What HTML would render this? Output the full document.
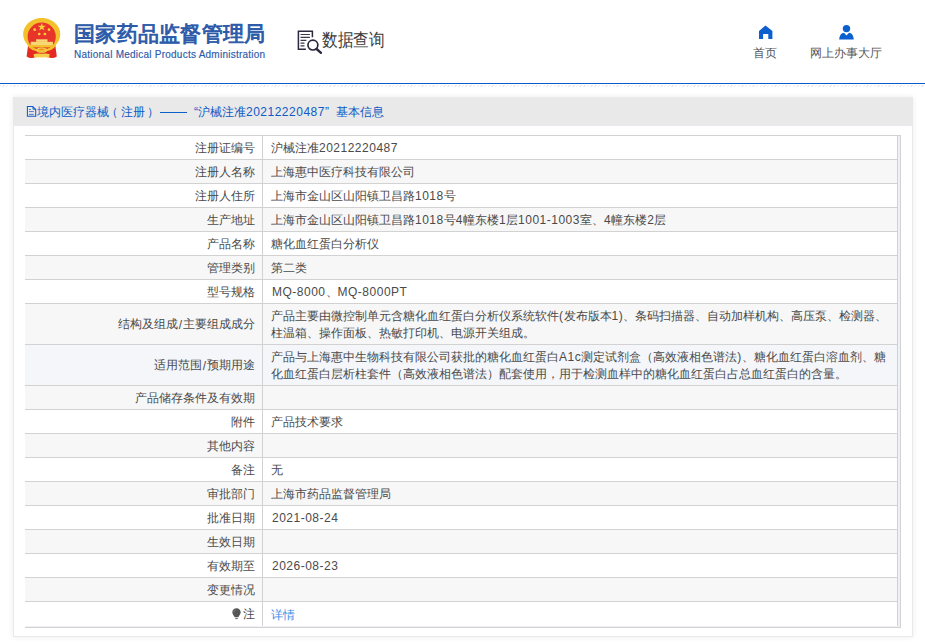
<!DOCTYPE html>
<html><head><meta charset="utf-8">
<style>
*{margin:0;padding:0;box-sizing:border-box}
html,body{width:925px;height:643px;overflow:hidden;background:#fff}
body{font-family:"Liberation Sans",sans-serif;font-size:12px;color:#4a4a4a;position:relative}
.abs{position:absolute;white-space:nowrap}
#emblem{left:23px;top:18px;width:38px;height:41px}
#title{left:74px;top:21px;font-size:21px;font-weight:400;color:#2c5aa8;line-height:26px;letter-spacing:.3px;-webkit-text-stroke:.9px #2c5aa8}
#sub{left:74px;top:49px;font-size:10px;color:#2c5aa8;-webkit-text-stroke:.15px #2c5aa8;line-height:12px;letter-spacing:.24px}
#qicon{left:297px;top:30px;width:25px;height:24px}
#qtext{left:322px;top:29px;font-size:18px;color:#3a3a3a;line-height:22px;transform:scaleX(.87);transform-origin:0 0}
.nt{top:46px;font-size:12px;line-height:14px;color:#555}
#bline{left:0;top:83px;width:925px;height:1px;background:#0a5cc8}
#hatch{left:0;top:85px;width:925px;height:2px;background:repeating-linear-gradient(135deg,#e8e8e8 0 1px,#fff 1px 2.6px)}
#panel{left:13px;top:97px;width:900px;height:540px;background:#fff;border:1px solid #eaeaea;box-shadow:0 0 6px rgba(0,0,0,.08)}
#phead{left:13px;top:97px;width:900px;height:29px;background:#e9e9e9;border-bottom:1px solid #e7eaf2}
.ph{top:104px;color:#0f5ac6;line-height:16px}
#tb{left:25px;top:135px;width:876px;height:493px;border-top:1px solid #d2d2d2;border-right:1px solid #d2d2d2;border-bottom:1px solid #d2d2d2;background:#eef1f8}
.r{position:relative;height:24px;border-bottom:1px solid #d2d2d2;width:873px;background:#fff;display:flex}
.r.g{background:#f7f7f7}
.r.h{background:#f4f6fa}
.r.m{height:41px}
.r.l{height:24px;border-bottom:none}
.k{padding-top:1px;width:238px;border-right:1px solid #d2d2d2;text-align:right;padding-right:7px;display:flex;align-items:center;justify-content:flex-end;white-space:nowrap}
.v{padding-top:1px;flex:1;padding-left:8px;border-right:1px solid #d2d2d2;display:flex;align-items:center;white-space:nowrap;line-height:17px}
.d{letter-spacing:.5px}
p{white-space:nowrap}
a{color:#3a8ee6;text-decoration:none;position:relative;top:1px}
</style></head><body>
<svg id="emblem" class="abs" viewBox="0 0 38 41">
  <path d="M5 28 L3.6 38.5 Q7 41 11 39.6 L18.7 38 L26.4 39.6 Q30.4 41 33.8 38.5 L32.4 28Z" fill="#e42a22"/>
  <ellipse cx="18.7" cy="16.3" rx="18.6" ry="16.4" fill="#f3c12c"/>
  <circle cx="18.7" cy="18.6" r="14.1" fill="#e8352a"/>
  <path d="M4.6 24 Q6 30.5 18.7 31.6 Q31.4 30.5 32.8 24 L32.8 27.5 Q30 33.4 18.7 34 Q7.4 33.4 4.6 27.5Z" fill="#f3c12c"/>
  <rect x="13.1" y="21.3" width="11.4" height="2.6" fill="#f8d874"/>
  <rect x="7.7" y="23.8" width="22.2" height="3.3" fill="#f8d874"/>
  <rect x="6.2" y="27" width="25" height="2.4" fill="#f3c12c"/>
  <polygon points="18.8,4.9 19.8,7.7 22.9,7.7 20.4,9.6 21.3,12.5 18.8,10.7 16.3,12.5 17.2,9.6 14.7,7.7 17.8,7.7" fill="#f7cf3c"/>
  <circle cx="11.7" cy="11.7" r="1.35" fill="#f7cf3c"/><circle cx="16.2" cy="16" r="1.35" fill="#f7cf3c"/>
  <circle cx="21.9" cy="16" r="1.35" fill="#f7cf3c"/><circle cx="26" cy="11.7" r="1.35" fill="#f7cf3c"/>
  <ellipse cx="18.7" cy="32.2" rx="4.6" ry="2" fill="none" stroke="#f5d04a" stroke-width="1.3"/>
  <path d="M10.5 36.3 Q14 34.8 18.7 35.8 Q23.2 34.8 26.8 36.3 L25.8 39.8 Q22 38.6 18.7 39.6 Q15 38.6 11.5 39.8Z" fill="#f5d04a"/>
</svg>
<div id="title" class="abs">国家药品监督管理局</div>
<div id="sub" class="abs">National Medical Products Administration</div>
<svg id="qicon" class="abs" viewBox="0 0 25 24">
  <path d="M8.9 19.2 H1.4 V1.3 H15.4 V7.2" fill="none" stroke="#2a2a3c" stroke-width="1.5"/>
  <path d="M3.5 4.5H12.9M3.5 7.4H12.9M3.5 10.4H9.4M3.5 13.1H7.5M3.5 15.9H7.5" stroke="#3a3a4a" stroke-width="1.1"/>
  <circle cx="15.9" cy="15.05" r="4.95" fill="none" stroke="#2a2a3c" stroke-width="1.7"/>
  <path d="M19.6 19 L24 22.8" stroke="#2a2a3c" stroke-width="2.4" stroke-linecap="round"/>
</svg>
<div id="qtext" class="abs">数据查询</div>
<svg class="abs" style="left:759px;top:25px" width="14" height="14" viewBox="0 0 14 14"><path d="M6.5 0.5 L13.4 6 V14 H9.3 V9.1 H4.1 V14 H0 V6Z" fill="#0b5fcf"/></svg>
<div class="abs nt" style="left:753px">首页</div>
<svg class="abs" style="left:839px;top:24px" width="15" height="16" viewBox="0 0 15 16"><circle cx="7.5" cy="4.6" r="3.7" fill="#0b5fcf"/><path d="M0.2 15.6 C0.5 11 2.5 9 5 8.7 L7.5 11.5 L10 8.7 C12.5 9 14.5 11 14.8 15.6Z" fill="#0b5fcf"/></svg>
<div class="abs nt" style="left:810px">网上办事大厅</div>
<div id="bline" class="abs"></div>
<div id="hatch" class="abs"></div>
<div id="panel" class="abs"></div>
<div id="phead" class="abs"></div>
<svg class="abs" style="left:26px;top:105px" width="11" height="12" viewBox="0 0 11 12"><path d="M1.4 1.5H6.8L9.7 4.4V11.2H1.4Z" fill="none" stroke="#0f5ac6" stroke-width="1.05"/><path d="M7 2V4.2H9.3" fill="none" stroke="#0f5ac6" stroke-width="1"/><path d="M3 4.5H4.9M3 6.6H7.8M3 9.4H7.8" stroke="#3a6ad0" stroke-width=".9"/></svg>
<div class="abs ph" style="left:37px">境内医疗器械</div>
<div class="abs ph" style="left:106px">（</div>
<div class="abs ph" style="left:121px">注册</div>
<div class="abs ph" style="left:147px">）</div>
<div class="abs" style="left:160px;top:112px;width:27px;height:1px;background:#0b5fc8"></div>
<div class="abs ph" style="left:194px">“</div>
<div class="abs ph" style="left:198px">沪械注准<span class="d">20212220487</span></div>
<div class="abs ph" style="left:325px">”</div>
<div class="abs ph" style="left:336px">基本信息</div>
<div id="tb" class="abs">
 <div class="r"><div class="k">注册证编号</div><div class="v"><p>沪械注准<span class="d">20212220487</span></p></div></div>
 <div class="r g"><div class="k">注册人名称</div><div class="v"><p>上海惠中医疗科技有限公司</p></div></div>
 <div class="r"><div class="k">注册人住所</div><div class="v"><p>上海市金山区山阳镇卫昌路<span class="d">1018</span>号</p></div></div>
 <div class="r g"><div class="k">生产地址</div><div class="v"><p>上海市金山区山阳镇卫昌路<span class="d">1018</span>号<span class="d">4</span>幢东楼<span class="d">1</span>层<span class="d">1001-1003</span>室、<span class="d">4</span>幢东楼<span class="d">2</span>层</p></div></div>
 <div class="r"><div class="k">产品名称</div><div class="v"><p>糖化血红蛋白分析仪</p></div></div>
 <div class="r g"><div class="k">管理类别</div><div class="v"><p>第二类</p></div></div>
 <div class="r"><div class="k">型号规格</div><div class="v"><p style="margin-left:1px"><span class="d">MQ-8000</span>、<span class="d">MQ-8000PT</span></p></div></div>
 <div class="r g m"><div class="k">结构及组成<span style="margin:0 1px">/</span>主要组成成分</div><div class="v"><p>产品主要由微控制单元含糖化血红蛋白分析仪系统软件<span class="d">(</span>发布版本<span class="d">1)</span>、条码扫描器、自动加样机构、高压泵、检测器、<br>柱温箱、操作面板、热敏打印机、电源开关组成。</p></div></div>
 <div class="r h m"><div class="k">适用范围<span style="margin:0 1px">/</span>预期用途</div><div class="v"><p>产品与上海惠中生物科技有限公司获批的糖化血红蛋白<span class="d">A1c</span>测定试剂盒（高效液相色谱法<span class="d">)</span>、糖化血红蛋白溶血剂、糖<br>化血红蛋白层析柱套件（高效液相色谱法）配套使用，用于检测血样中的糖化血红蛋白占总血红蛋白的含量。</p></div></div>
 <div class="r g"><div class="k">产品储存条件及有效期</div><div class="v"><p></p></div></div>
 <div class="r"><div class="k">附件</div><div class="v"><p>产品技术要求</p></div></div>
 <div class="r g"><div class="k">其他内容</div><div class="v"><p></p></div></div>
 <div class="r"><div class="k">备注</div><div class="v"><p>无</p></div></div>
 <div class="r g"><div class="k">审批部门</div><div class="v"><p>上海市药品监督管理局</p></div></div>
 <div class="r"><div class="k">批准日期</div><div class="v"><p style="margin-left:1px"><span class="d">2021-08-24</span></p></div></div>
 <div class="r g"><div class="k">生效日期</div><div class="v"><p></p></div></div>
 <div class="r"><div class="k">有效期至</div><div class="v"><p style="margin-left:1px"><span class="d">2026-08-23</span></p></div></div>
 <div class="r g"><div class="k">变更情况</div><div class="v"><p></p></div></div>
 <div class="r l"><div class="k"><svg width="10" height="12" viewBox="0 0 10 12" style="margin-right:1px;position:relative;top:-1px"><path d="M4.5 0.2C7 0.2 8.7 2 8.7 4.3C8.7 6.3 7.2 7.4 6.3 9.2H2.7C1.8 7.4 0.3 6.3 0.3 4.3C0.3 2 2 0.2 4.5 0.2Z" fill="#555"/><path d="M2 4.5C2 3 2.8 2.2 3.6 1.8" fill="none" stroke="#8a8a8a" stroke-width=".8"/><rect x="3.2" y="10.1" width="2.6" height="1" fill="#666"/></svg>注</div><div class="v"><p><a>详情</a></p></div></div>
</div>
</body></html>
